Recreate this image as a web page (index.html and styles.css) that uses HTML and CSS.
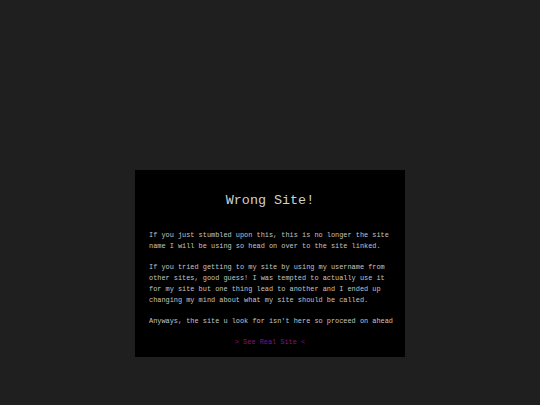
FILE: index.html
```html
<!DOCTYPE html>
<html>
<head>
<meta charset="utf-8">
<link rel="stylesheet" href="styles.css">
</head>
<body>
<div class="card">
  <h1 class="title">Wrong Site!</h1>
  <p class="text">If you just stumbled upon this, this is no longer the site name I will be using so head on over to the site linked.</p>
  <p class="text">If you tried getting to my site by using my username from other sites, good guess! I was tempted to actually use it for my site but one thing lead to another and I ended up changing my mind about what my site should be called.</p>
  <p class="text">Anyways, the site u look for isn't here so proceed on ahead</p>
  <p class="link-row"><a class="link" href="#">&gt; See Real Site &lt;</a></p>
</div>
</body>
</html>
```
FILE: styles.css
```css
html, body {
  margin: 0;
  padding: 0;
  background: #1f1f1f;
  height: 100%;
}
body {
  font-family: "Liberation Mono", "Courier New", monospace;
  color: #c4c4c4;
  padding-top: 170px;
  box-sizing: border-box;
}
.card {
  width: 270px;
  margin: 0 auto;
  background: #000;
  padding: 23px 10px 9px 14px;
  box-sizing: border-box;
}
.title {
  margin: 0 4px 21px 0;
  font-size: 13.4px;
  line-height: 16px;
  font-weight: normal;
  text-align: center;
  color: #d0d0d0;
}
.text {
  margin: 0 0 10px;
  font-size: 6.9px;
  line-height: 11px;
}
.link-row {
  margin: 0 4px 0 0;
  text-align: center;
  font-size: 6.9px;
  line-height: 11px;
}
.link {
  color: #8a0f8a;
  text-decoration: none;
}
```
